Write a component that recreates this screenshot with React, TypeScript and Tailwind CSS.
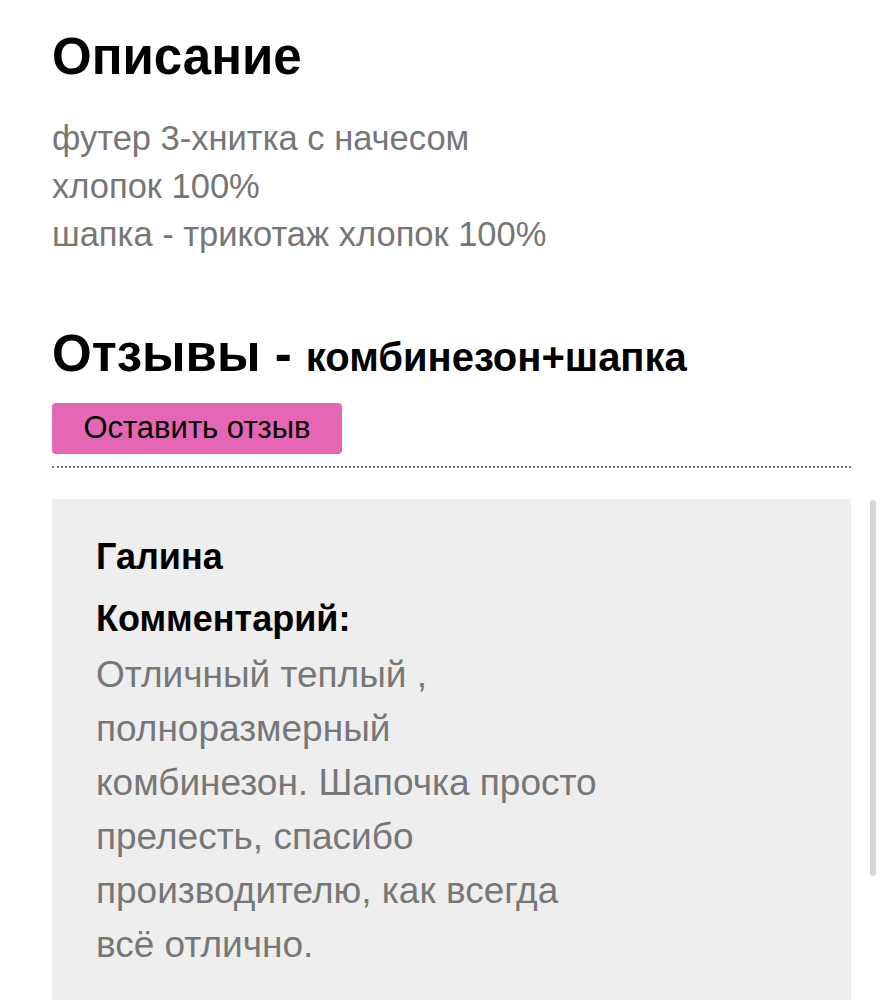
export default function App() {
  const comment = [
    "Отличный теплый ,",
    "полноразмерный",
    "комбинезон. Шапочка просто",
    "прелесть, спасибо",
    "производителю, как всегда",
    "всё отлично.",
  ];

  return (
    <div className="relative h-[1000px] overflow-hidden bg-white pl-[52px] pr-[32px] font-['Liberation_Sans',Arial,sans-serif]">
      {/* Description */}
      <h2 className="mt-[32px] text-[51px] leading-[50px] font-bold text-black">Описание</h2>
      <div className="mt-[32px] text-[34.5px] leading-[48px] text-[#767676]">
        <div>футер 3-хнитка с начесом</div>
        <div>хлопок 100%</div>
        <div>шапка - трикотаж хлопок 100%</div>
      </div>

      {/* Reviews */}
      <h2 className="mt-[71px] text-[51px] leading-[50px] font-bold text-black">
        Отзывы - <span className="text-[40px]">комбинезон+шапка</span>
      </h2>
      <button className="mt-[21px] flex h-[51px] w-[290px] items-center justify-center rounded-[4px] bg-[#e466b4] text-[31px] text-black">
        Оставить отзыв
      </button>
      <div className="mt-[12px] border-t-2 border-dotted border-[#777]" />

      <div className="mt-[31px] bg-[#eeeeee] pl-[44px] pr-[30px] pt-[36px] pb-[60px]">
        <div className="text-[36px] leading-[44px] font-bold text-black">Галина</div>
        <div className="mt-[18px] text-[36px] leading-[44px] font-bold text-black">Комментарий:</div>
        <div className="mt-[7px] text-[37px] leading-[54px] text-[#777]">
          {comment.map((line) => (
            <div key={line}>{line}</div>
          ))}
        </div>
      </div>

      {/* scroll indicator */}
      <div className="absolute right-[7px] top-[500px] h-[376px] w-[6px] rounded-full bg-[#d6d6d6]" />
    </div>
  );
}
